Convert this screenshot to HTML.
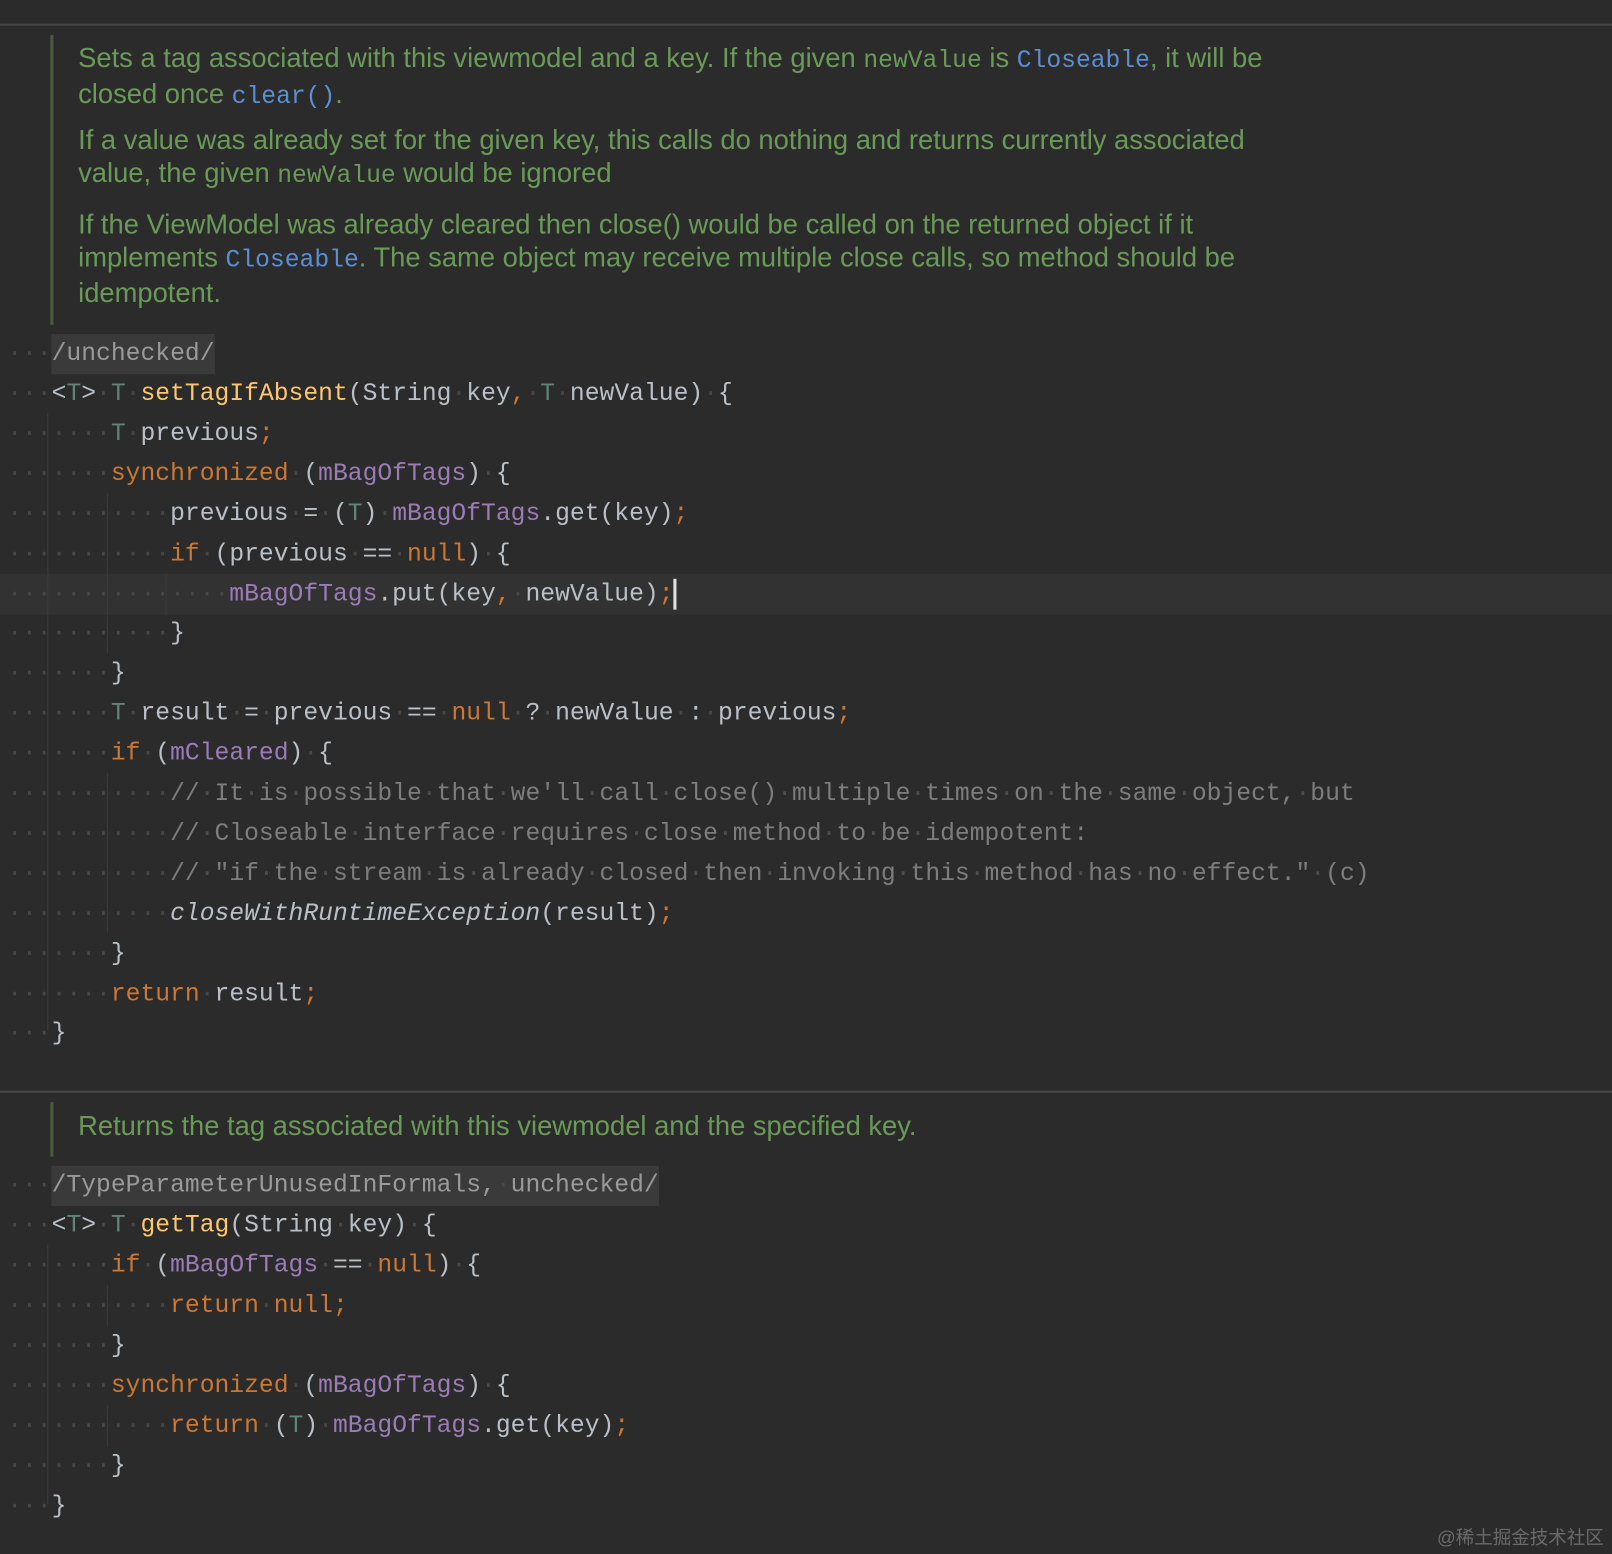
<!DOCTYPE html>
<html><head><meta charset="utf-8"><style>
html,body{margin:0;padding:0;width:1612px;height:1554px;background:#2b2b2b;overflow:hidden;position:relative}
#w{position:absolute;left:0;top:0;width:1568px;height:1512px;transform:scale(1.02806);transform-origin:0 0}
.sep{position:absolute;left:0;width:1568px;height:2px;background:#464646}
.doc{position:absolute;left:76px;font-family:"Liberation Sans",sans-serif;font-size:26.6px;color:#6a9a58;line-height:31.8px;white-space:nowrap}
.doc code{font-family:"Liberation Mono",monospace;font-size:24px;color:#6a9a58}
.doc code.l{color:#5b8fd4}
.bar{position:absolute;left:49px;width:3px;background:#4b5b42}
.ln{position:absolute;left:7px;height:39px;line-height:39px;font-family:"Liberation Mono",monospace;font-size:24px;color:#b9c0c7;white-space:pre}
i{font-style:normal;color:#474747}
.k{color:#cc7832}.p{color:#9b7cb6}.f{color:#ffc66d}.t{color:#5e8577}.c{color:#7d7d7d}.c i{color:#4d4d4d}
em{font-style:italic}
.an{background:#3a3a3a;color:#9a9a9a;display:inline-block;height:39px}
.g{position:absolute;width:1px;background:#3a3a3a}
.cur{display:inline-block;width:3px;height:30px;background:#e0e0e0;vertical-align:middle}
</style></head><body><div id="w">
<div class="sep" style="top:23px"></div>
<div class="sep" style="top:1061px"></div>
<div class="bar" style="top:34px;height:282px"></div>
<div class="doc" style="top:41px">Sets a tag associated with this viewmodel and a key. If the given <code>newValue</code> is <code class="l">Closeable</code>, it will be<br>closed once <code class="l">clear()</code>.</div>
<div class="doc" style="top:121px">If a value was already set for the given key, this calls do nothing and returns currently associated<br>value, the given <code>newValue</code> would be ignored</div>
<div class="doc" style="top:203px">If the ViewModel was already cleared then close() would be called on the returned object if it<br>implements <code class="l">Closeable</code>. The same object may receive multiple close calls, so method should be<br>idempotent.</div>

<div style="position:absolute;left:0;top:558px;width:1568px;height:40px;background:#323232"></div>
<div class="g" style="left:46px;top:402px;height:600px"></div>
<div class="g" style="left:104px;top:480px;height:155px"></div>
<div class="g" style="left:161px;top:558px;height:40px"></div>
<div class="g" style="left:104px;top:752px;height:155px"></div>
<div class="g" style="left:46px;top:1211px;height:252px"></div>
<div class="g" style="left:104px;top:1250px;height:40px"></div>
<div class="g" style="left:104px;top:1367px;height:40px"></div>

<div class="ln" style="top:325px"><i>···</i><span class="an">/unchecked/</span></div>
<div class="ln" style="top:364px"><i>···</i>&lt;<span class="t">T</span>&gt;<i>·</i><span class="t">T</span><i>·</i><span class="f">setTagIfAbsent</span>(String<i>·</i>key<span class="k">,</span><i>·</i><span class="t">T</span><i>·</i>newValue)<i>·</i>{</div>
<div class="ln" style="top:403px"><i>·······</i><span class="t">T</span><i>·</i>previous<span class="k">;</span></div>
<div class="ln" style="top:442px"><i>·······</i><span class="k">synchronized</span><i>·</i>(<span class="p">mBagOfTags</span>)<i>·</i>{</div>
<div class="ln" style="top:481px"><i>···········</i>previous<i>·</i>=<i>·</i>(<span class="t">T</span>)<i>·</i><span class="p">mBagOfTags</span>.get(key)<span class="k">;</span></div>
<div class="ln" style="top:520px"><i>···········</i><span class="k">if</span><i>·</i>(previous<i>·</i>==<i>·</i><span class="k">null</span>)<i>·</i>{</div>
<div class="ln" style="top:559px"><i>···············</i><span class="p">mBagOfTags</span>.put(key<span class="k">,</span><i>·</i>newValue)<span class="k">;</span><span class="cur"></span></div>
<div class="ln" style="top:597px"><i>···········</i>}</div>
<div class="ln" style="top:636px"><i>·······</i>}</div>
<div class="ln" style="top:675px"><i>·······</i><span class="t">T</span><i>·</i>result<i>·</i>=<i>·</i>previous<i>·</i>==<i>·</i><span class="k">null</span><i>·</i>?<i>·</i>newValue<i>·</i>:<i>·</i>previous<span class="k">;</span></div>
<div class="ln" style="top:714px"><i>·······</i><span class="k">if</span><i>·</i>(<span class="p">mCleared</span>)<i>·</i>{</div>
<div class="ln" style="top:753px"><i>···········</i><span class="c">//<i>·</i>It<i>·</i>is<i>·</i>possible<i>·</i>that<i>·</i>we'll<i>·</i>call<i>·</i>close()<i>·</i>multiple<i>·</i>times<i>·</i>on<i>·</i>the<i>·</i>same<i>·</i>object,<i>·</i>but</span></div>
<div class="ln" style="top:792px"><i>···········</i><span class="c">//<i>·</i>Closeable<i>·</i>interface<i>·</i>requires<i>·</i>close<i>·</i>method<i>·</i>to<i>·</i>be<i>·</i>idempotent:</span></div>
<div class="ln" style="top:831px"><i>···········</i><span class="c">//<i>·</i>"if<i>·</i>the<i>·</i>stream<i>·</i>is<i>·</i>already<i>·</i>closed<i>·</i>then<i>·</i>invoking<i>·</i>this<i>·</i>method<i>·</i>has<i>·</i>no<i>·</i>effect."<i>·</i>(c)</span></div>
<div class="ln" style="top:870px"><i>···········</i><em>closeWithRuntimeException</em>(result)<span class="k">;</span></div>
<div class="ln" style="top:909px"><i>·······</i>}</div>
<div class="ln" style="top:948px"><i>·······</i><span class="k">return</span><i>·</i>result<span class="k">;</span></div>
<div class="ln" style="top:986px"><i>···</i>}</div>

<div class="bar" style="top:1072px;height:53px"></div>
<div class="doc" style="top:1080px">Returns the tag associated with this viewmodel and the specified key.</div>
<div class="ln" style="top:1134px"><i>···</i><span class="an">/TypeParameterUnusedInFormals,<i>·</i>unchecked/</span></div>
<div class="ln" style="top:1173px"><i>···</i>&lt;<span class="t">T</span>&gt;<i>·</i><span class="t">T</span><i>·</i><span class="f">getTag</span>(String<i>·</i>key)<i>·</i>{</div>
<div class="ln" style="top:1212px"><i>·······</i><span class="k">if</span><i>·</i>(<span class="p">mBagOfTags</span><i>·</i>==<i>·</i><span class="k">null</span>)<i>·</i>{</div>
<div class="ln" style="top:1251px"><i>···········</i><span class="k">return</span><i>·</i><span class="k">null;</span></div>
<div class="ln" style="top:1290px"><i>·······</i>}</div>
<div class="ln" style="top:1329px"><i>·······</i><span class="k">synchronized</span><i>·</i>(<span class="p">mBagOfTags</span>)<i>·</i>{</div>
<div class="ln" style="top:1368px"><i>···········</i><span class="k">return</span><i>·</i>(<span class="t">T</span>)<i>·</i><span class="p">mBagOfTags</span>.get(key)<span class="k">;</span></div>
<div class="ln" style="top:1407px"><i>·······</i>}</div>
<div class="ln" style="top:1446px"><i>···</i>}</div>

<div style="position:absolute;right:8px;top:1482px;font-family:'Liberation Sans','Noto Sans CJK SC',sans-serif;font-size:18px;color:#6a6a6a">@稀土掘金技术社区</div>
</div></body></html>
